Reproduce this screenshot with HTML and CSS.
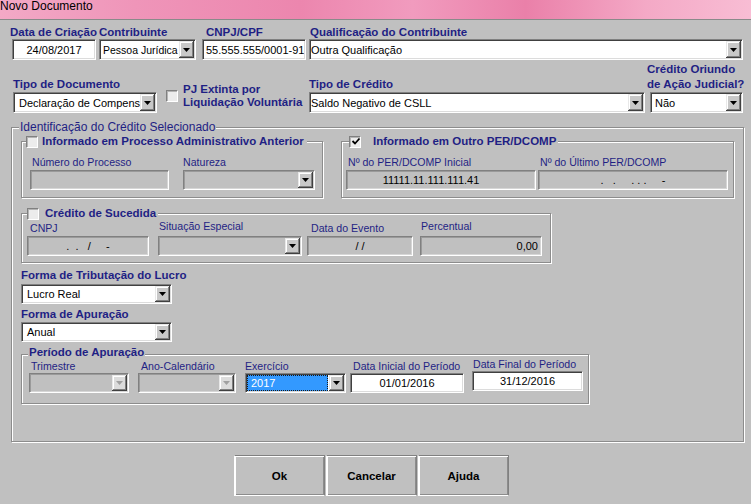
FILE: index.html
```html
<!DOCTYPE html>
<html lang="pt-BR">
<head>
<meta charset="utf-8">
<title>Novo Documento</title>
<link rel="stylesheet" href="styles.css">
</head>
<body>
<div class="titlebar">Novo Documento</div>
<div class="content">
  <div class="row1">
    <div class="fld f-date">
      <span class="lbl">Data de Criação</span>
      <div class="box c"><span class="txt">24/08/2017</span></div>
    </div>
    <div class="fld f-contrib">
      <span class="lbl">Contribuinte</span>
      <div class="box sel"><span class="txt p2 narrow">Pessoa Jurídica</span><span class="dd"><svg viewBox="0 0 7 4"><polygon points="0,0 7,0 3.5,4"/></svg></span></div>
    </div>
    <div class="fld f-cnpj">
      <span class="lbl">CNPJ/CPF</span>
      <div class="box"><span class="txt p2">55.555.555/0001-91</span></div>
    </div>
    <div class="fld f-qual">
      <span class="lbl">Qualificação do Contribuinte</span>
      <div class="box sel"><span class="txt">Outra Qualificação</span><span class="dd"><svg viewBox="0 0 7 4"><polygon points="0,0 7,0 3.5,4"/></svg></span></div>
    </div>
  </div>

  <div class="row2">
    <div class="fld f-tipodoc">
      <span class="lbl lbl2">Tipo de Documento</span>
      <div class="box sel"><span class="txt p4">Declaração de Compensação</span><span class="dd"><svg viewBox="0 0 7 4"><polygon points="0,0 7,0 3.5,4"/></svg></span></div>
    </div>
    <div class="pj">
      <span class="cb"></span>
      <span class="lbl pj-txt">PJ Extinta por<br>Liquidação Voluntária</span>
    </div>
    <div class="fld f-tipocred">
      <span class="lbl lbl2">Tipo de Crédito</span>
      <div class="box sel"><span class="txt">Saldo Negativo de CSLL</span><span class="dd"><svg viewBox="0 0 7 4"><polygon points="0,0 7,0 3.5,4"/></svg></span></div>
    </div>
    <div class="fld f-oriundo">
      <span class="lbl lbl2">Crédito Oriundo<br>de Ação Judicial?</span>
      <div class="box sel"><span class="txt p3">Não</span><span class="dd"><svg viewBox="0 0 7 4"><polygon points="0,0 7,0 3.5,4"/></svg></span></div>
    </div>
  </div>

  <fieldset class="grp main">
    <legend class="main-lg">Identificação do Crédito Selecionado</legend>

    <div class="subrow">
      <fieldset class="grp sub1">
        <legend class="lg-sub1"><span class="lg"><span class="cb"></span><span class="lbl">Informado em Processo Administrativo Anterior</span></span></legend>
        <div class="flds sub1-flds">
          <div class="fld s1f1">
            <span class="lbln">Número do Processo</span>
            <div class="box h20 dis"></div>
          </div>
          <div class="fld s1f2">
            <span class="lbln">Natureza</span>
            <div class="box h20 dis sel"><span class="txt"></span><span class="dd"><svg viewBox="0 0 7 4"><polygon points="0,0 7,0 3.5,4"/></svg></span></div>
          </div>
        </div>
      </fieldset>

      <fieldset class="grp sub2">
        <legend class="lg-sub2"><span class="lg"><span class="cb on"><svg viewBox="0 0 10 10"><polyline points="1.5,4 4,6.5 8.5,1.5"/></svg></span><span class="lbl">Informado em Outro PER/DCOMP</span></span></legend>
        <div class="flds sub2-flds">
          <div class="fld s2f1">
            <span class="lbln">Nº do PER/DCOMP Inicial</span>
            <div class="box h20 dis c"><span class="txt per1">11111.11.111.111.41</span></div>
          </div>
          <div class="fld s2f2">
            <span class="lbln">Nº do Último PER/DCOMP</span>
            <div class="box h20 dis c"><span class="txt pre">.   .     . . .     -</span></div>
          </div>
        </div>
      </fieldset>
    </div>

    <fieldset class="grp sub3">
      <legend class="lg-sub3"><span class="lg"><span class="cb"></span><span class="lbl">Crédito de Sucedida</span></span></legend>
      <div class="flds sub3-flds">
        <div class="fld s3f1">
          <span class="lbln low">CNPJ</span>
          <div class="box h20 dis c"><span class="txt pre">.  .   /     -</span></div>
        </div>
        <div class="fld s3f2">
          <span class="lbln">Situação Especial</span>
          <div class="box h20 dis sel"><span class="txt"></span><span class="dd"><svg viewBox="0 0 7 4"><polygon points="0,0 7,0 3.5,4"/></svg></span></div>
        </div>
        <div class="fld s3f3">
          <span class="lbln low">Data do Evento</span>
          <div class="box h20 dis c"><span class="txt pre">/ /</span></div>
        </div>
        <div class="fld s3f4">
          <span class="lbln">Percentual</span>
          <div class="box h20 dis r"><span class="txt">0,00</span></div>
        </div>
      </div>
    </fieldset>

    <div class="fld f-trib">
      <span class="lbl lbl14">Forma de Tributação do Lucro</span>
      <div class="box h20 sel"><span class="txt p4">Lucro Real</span><span class="dd"><svg viewBox="0 0 7 4"><polygon points="0,0 7,0 3.5,4"/></svg></span></div>
    </div>
    <div class="fld f-apur">
      <span class="lbl lbl14">Forma de Apuração</span>
      <div class="box h20 sel"><span class="txt p4">Anual</span><span class="dd"><svg viewBox="0 0 7 4"><polygon points="0,0 7,0 3.5,4"/></svg></span></div>
    </div>

    <fieldset class="grp periodo">
      <legend class="lg-per"><span class="lbl">Período de Apuração</span></legend>
      <div class="flds per-flds">
        <div class="fld pf1">
          <span class="lbln">Trimestre</span>
          <div class="box h20 dis sel"><span class="txt"></span><span class="dd off"><svg viewBox="0 0 7 4"><polygon points="0,0 7,0 3.5,4"/></svg></span></div>
        </div>
        <div class="fld pf2">
          <span class="lbln">Ano-Calendário</span>
          <div class="box h20 dis sel"><span class="txt"></span><span class="dd off"><svg viewBox="0 0 7 4"><polygon points="0,0 7,0 3.5,4"/></svg></span></div>
        </div>
        <div class="fld pf3">
          <span class="lbln">Exercício</span>
          <div class="box h20 sel"><span class="txt hl">2017</span><span class="dd"><svg viewBox="0 0 7 4"><polygon points="0,0 7,0 3.5,4"/></svg></span></div>
        </div>
        <div class="fld pf4">
          <span class="lbln">Data Inicial do Período</span>
          <div class="box h20 c"><span class="txt">01/01/2016</span></div>
        </div>
        <div class="fld pf5">
          <span class="lbln">Data Final do Período</span>
          <div class="box h20 c"><span class="txt">31/12/2016</span></div>
        </div>
      </div>
    </fieldset>
  </fieldset>

  <div class="buttons">
    <button class="btn">Ok</button>
    <button class="btn">Cancelar</button>
    <button class="btn">Ajuda</button>
  </div>
</div>
</body>
</html>
```

FILE: styles.css
```css
* { box-sizing: border-box; }

body {
  margin: 0;
  width: 751px;
  height: 504px;
  overflow: hidden;
  background: #c0c0c0;
  font-family: "Liberation Sans", Arial, sans-serif;
  font-size: 11px;
  color: #000;
}

.titlebar {
  height: 20px;
  border-bottom: 1px solid #8a8a8a;
  background: linear-gradient(90deg, #f3a9c6 0%, #ef95b9 18%, #ec86ae 40%, #f19bbe 55%, #ea80a9 70%, #f4a9c6 86%, #f8bdd4 100%);
  font-size: 12px;
  line-height: 13px;
  color: #000;
}

.content { padding-top: 6px; }

/* generic field column */
.fld {
  display: flex;
  flex-direction: column;
  align-items: flex-start;
  flex: none;
}

.lbl {
  font-weight: bold;
  font-size: 11.5px;
  line-height: 13px;
  color: #1f1f84;
  white-space: nowrap;
}

.lbln {
  font-size: 10.6px;
  line-height: 13px;
  color: #1f1f84;
  white-space: nowrap;
}

/* sunken box */
.box {
  height: 21px;
  border: 1px solid;
  border-color: #808080 #ffffff #ffffff #808080;
  box-shadow: inset 1px 1px 0 #404040, inset -1px -1px 0 #dcdcdc;
  background: #fff;
  padding: 1px;
  display: flex;
  align-items: center;
  overflow: hidden;
  white-space: nowrap;
}
.box.h20 { height: 20px; }
.box.dis {
  background: #c0c0c0;
  box-shadow: inset 1px 1px 0 #9a9a9a, inset -1px -1px 0 #d6d6d6;
}
.box .txt {
  flex: 1;
  min-width: 0;
  overflow: hidden;
  white-space: nowrap;
}
.box.c .txt { text-align: center; }
.box.r .txt { text-align: right; padding-right: 2px; }
.txt.p2 { padding-left: 2px; }
.txt.p3 { padding-left: 3px; }
.txt.p4 { padding-left: 4px; }
.txt.narrow { font-size: 10.5px; }
.txt.pre { white-space: pre; }
.txt.per1 { padding-right: 20px; }
.txt.hl {
  align-self: stretch;
  margin-right: 1px;
  background: #3399ff;
  color: #fff;
  border: 1px dotted #1a1a1a;
  padding-left: 3px;
  line-height: 14px;
}

/* dropdown button */
.dd {
  flex: none;
  width: 15px;
  align-self: stretch;
  background: #c8c8c8;
  box-shadow: inset -1px -1px 0 #404040, inset 1px 1px 0 #e8e8e8, inset -2px -2px 0 #808080, inset 2px 2px 0 #ffffff;
  display: flex;
  align-items: center;
  justify-content: center;
}
.dd svg { width: 7px; height: 4px; display: block; }
.dd polygon { fill: #000; }
.dd.off { background: #dcdcdc; }
.dd.off polygon { fill: #a0a0a0; }

/* checkbox */
.cb {
  flex: none;
  display: block;
  width: 12px;
  height: 12px;
  border: 1px solid;
  border-color: #808080 #ffffff #ffffff #808080;
  box-shadow: inset 1px 1px 0 #b4b4b4;
  background: #ececec;
  position: relative;
}
.cb svg {
  position: absolute;
  left: 1px;
  top: 0;
  width: 10px;
  height: 10px;
}
.cb polyline { fill: none; stroke: #000; stroke-width: 1.8; }

/* row 1 */
.row1 { display: flex; margin-left: 10px; }
.f-date { width: 89px; }
.f-date .box { width: 84px; margin-left: 2px; }
.f-contrib { width: 103px; }
.f-contrib .box { width: 97px; }
.f-cnpj { width: 107px; }
.f-cnpj .lbl { margin-left: 4px; }
.f-cnpj .box { width: 104px; }
.f-qual .lbl { margin-left: 1px; }
.f-qual .box { width: 434px; }

/* row 2 */
.row2 {
  display: flex;
  align-items: flex-end;
  margin: 2px 0 0 13px;
}
.lbl2 { line-height: 15px; }
.f-tipodoc { width: 153px; }
.f-tipodoc .box { width: 144px; }
.pj {
  width: 143px;
  display: flex;
  align-items: center;
  margin-bottom: 4px;
}
.pj-txt { margin-left: 5px; line-height: 13px; }
.f-tipocred { width: 338px; }
.f-tipocred .box { width: 336px; }
.f-oriundo .box { width: 93px; margin-left: 3px; }

/* group boxes */
.grp {
  margin: 0;
  padding: 0;
  min-width: 0;
  border: 1px solid #8c8c8c;
  box-shadow: inset 1px 1px 0 #fff, 1px 1px 0 #fff;
}
.grp legend {
  padding: 0;
  background: #c0c0c0;
}
.lg { display: flex; align-items: center; height: 13px; }

.main {
  width: 733px;
  margin: 7px 0 0 11px;
  padding-bottom: 37px;
}
.main-lg {
  margin-left: 7px;
  padding: 0 1px !important;
  font-size: 12px;
  line-height: 14px;
  color: #1f1f84;
}

.subrow { display: flex; margin: 1px 0 0 9px; }
.sub1 { width: 302px; }
.sub2 { width: 393px; margin-left: 18px; }
.lg-sub1 { margin-left: 4px; padding-right: 3px !important; }
.lg-sub1 .lbl { margin-left: 4px; }
.lg-sub2 { margin-left: 7px; padding-right: 2px !important; }
.lg-sub2 .lbl { margin-left: 12px; }

.flds { display: flex; align-items: flex-start; }
.flds .box { margin-top: 1px; }

.sub1-flds { padding: 8px 0 7px 8px; }
.s1f1 .lbln { margin-left: 2px; }
.s1f1 .box { width: 139px; }
.s1f2 { margin-left: 14px; }
.s1f2 .box { width: 132px; }

.sub2-flds { padding: 8px 0 7px 4px; }
.s2f1 .lbln { margin-left: 2px; }
.s2f1 .box { width: 190px; }
.s2f2 { margin-left: 2px; }
.s2f2 .lbln { margin-left: 2px; }
.s2f2 .box { width: 190px; }

.sub3 { width: 530px; margin: 9px 0 0 9px; }
.lg-sub3 { margin-left: 5px; padding-right: 2px !important; }
.lg-sub3 .lbl { margin-left: 6px; }
.sub3-flds { padding: 0 0 6px 5px; }
.sub3-flds .box { margin-top: 3px; }
.sub3-flds .low { margin-top: 2px; }
.sub3-flds .low + .box { margin-top: 1px; }
.s3f1 .lbln { margin-left: 3px; }
.s3f1 .box { width: 122px; }
.s3f2 { margin-left: 9px; }
.s3f2 .lbln { margin-left: 1px; }
.s3f2 .box { width: 144px; }
.s3f3 { margin-left: 5px; }
.s3f3 .lbln { margin-left: 4px; }
.s3f3 .box { width: 106px; }
.s3f4 { margin-left: 7px; }
.s3f4 .lbln { margin-left: 1px; }
.s3f4 .box { width: 122px; }

.lbl14 { line-height: 14px; }
.f-trib { margin: 5px 0 0 9px; }
.f-trib .box { width: 151px; margin-top: 2px; }
.f-apur { margin: 3px 0 0 9px; }
.f-apur .box { width: 151px; margin-top: 1px; }

.periodo { width: 568px; margin: 3px 0 0 9px; }
.lg-per {
  margin-left: 6px;
  padding: 0 1px 4px 1px !important;
  line-height: 14px;
}
.lg-per .lbl { line-height: 14px; }
.per-flds { margin-top: -3px; padding: 0 0 10px 7px; }
.per-flds .box { margin-top: 0; }
.pf1 .lbln { margin-left: 2px; }
.pf1 .box { width: 100px; }
.pf2 { margin-left: 9px; }
.pf2 .lbln { margin-left: 3px; }
.pf2 .box { width: 98px; }
.pf3 { margin-left: 9px; }
.pf3 .box { width: 101px; }
.pf4 { margin-left: 4px; }
.pf4 .lbln { margin-left: 3px; }
.pf4 .box { width: 114px; }
.pf5 { margin-left: 8px; margin-top: -2px; }
.pf5 .lbln { margin-left: 1px; }
.pf5 .box { width: 111px; }

/* buttons */
.buttons {
  display: flex;
  gap: 1px;
  margin: 13px 0 0 234px;
}
.btn {
  width: 91px;
  height: 41px;
  margin: 0;
  padding: 0;
  background: #c0c0c0;
  border: 1px solid;
  border-color: #808080 #808080 #ffffff #ffffff;
  box-shadow: inset 1px 1px 0 #ffffff, inset -1px -1px 0 #8c8c8c;
  font-family: "Liberation Sans", Arial, sans-serif;
  font-weight: bold;
  font-size: 11.5px;
  color: #000;
}
```
